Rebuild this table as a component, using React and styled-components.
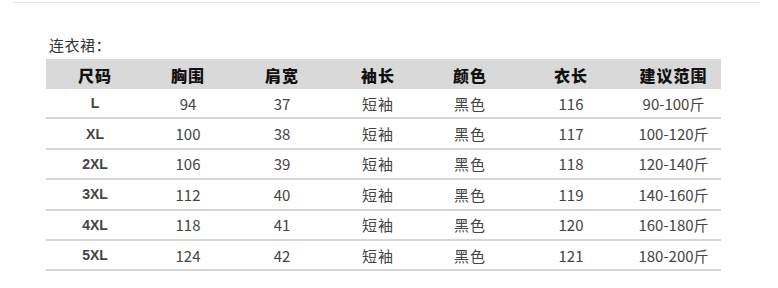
import React from 'react';
import styled, { createGlobalStyle } from 'styled-components';

const GlobalStyle = createGlobalStyle`
    body {
        margin: 0;
        background: #ffffff;
        font-family: "Noto Sans CJK SC", "Liberation Sans", sans-serif;
    }
`;

const Page = styled.div`
    width: 778px;
    height: 288px;
    padding-top: 2px;
    box-sizing: border-box;
    overflow: hidden;
`;

const TopRule = styled.div`
    margin: 0 18px 0 13px;
    height: 1px;
    background: #e4e4e4;
`;

const Section = styled.div`
    padding: 32px 0 0 46px;
`;

const Title = styled.div`
    margin-left: 3px;
    font-size: 15px;
    line-height: 20px;
    color: #333;
    letter-spacing: 0.5px;
    margin-bottom: 4px;
`;

const Table = styled.div`
    width: 675px;
`;

const Row = styled.div`
    display: grid;
    grid-template-columns: 98px 88px 100px 92px 92px 110px 95px;
    align-items: center;
    box-sizing: border-box;
    height: ${({ head }) => (head ? '30px' : '30.4px')};
    background: ${({ head }) => (head ? '#d9d9d9' : 'transparent')};
    border-bottom: ${({ head }) => (head ? 'none' : '2px solid #d7d7d7')};
`;

const HeadCell = styled.div`
    text-align: center;
    font-size: 16px;
    font-weight: 900;
    color: #111;
    letter-spacing: 1px;
    padding-top: 1px;
`;

const Cell = styled.div`
    text-align: center;
    color: #444;
    font-size: ${({ size }) => (size ? '14px' : '15px')};
    font-weight: ${({ size }) => (size ? 700 : 400)};
    font-family: ${({ size }) =>
        size ? '"Liberation Sans", sans-serif' : '"Noto Sans CJK SC", sans-serif'};
    letter-spacing: ${({ wide }) => (wide ? '1px' : '0')};
`;

const headers = ['尺码', '胸围', '肩宽', '袖长', '颜色', '衣长', '建议范围'];

const rows = [
    ['L', '94', '37', '短袖', '黑色', '116', '90-100斤'],
    ['XL', '100', '38', '短袖', '黑色', '117', '100-120斤'],
    ['2XL', '106', '39', '短袖', '黑色', '118', '120-140斤'],
    ['3XL', '112', '40', '短袖', '黑色', '119', '140-160斤'],
    ['4XL', '118', '41', '短袖', '黑色', '120', '160-180斤'],
    ['5XL', '124', '42', '短袖', '黑色', '121', '180-200斤'],
];

export default function App() {
    return (
        <Page>
            <GlobalStyle />
            <TopRule />
            <Section>
                <Title>连衣裙：</Title>
                <Table>
                    <Row head>
                        {headers.map((h) => (
                            <HeadCell key={h}>{h}</HeadCell>
                        ))}
                    </Row>
                    {rows.map((r) => (
                        <Row key={r[0]}>
                            {r.map((v, i) => (
                                <Cell key={i} size={i === 0} wide={i === 3 || i === 4}>
                                    {v}
                                </Cell>
                            ))}
                        </Row>
                    ))}
                </Table>
            </Section>
        </Page>
    );
}
